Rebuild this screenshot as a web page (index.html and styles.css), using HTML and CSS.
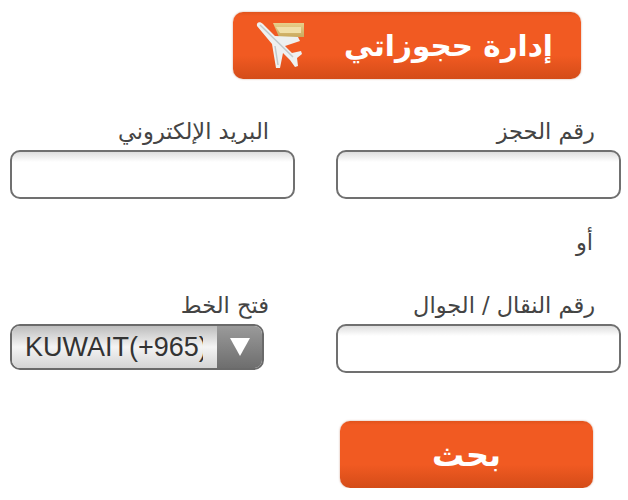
FILE: index.html
```html
<!DOCTYPE html>
<html lang="ar" dir="rtl">
<head>
    <meta charset="UTF-8">
    <meta name="viewport" content="width=device-width, initial-scale=1.0">
    <title>إدارة حجوزاتي</title>
    <link rel="stylesheet" href="styles.css">
</head>
<body>
    <div class="container">
        <div class="header">
            <button type="button" class="btn btn-manage">
                <span>إدارة حجوزاتي</span>
                <svg class="plane" width="50" height="54" viewBox="0 0 50 54" aria-hidden="true">
                    <defs>
                        <linearGradient id="ticket" x1="0" y1="0" x2="0" y2="1">
                            <stop offset="0" stop-color="#e8cf8a"/>
                            <stop offset="1" stop-color="#c9a95e"/>
                        </linearGradient>
                    </defs>
                    <path d="M18 4 H49 V18 H24 Z" fill="url(#ticket)"/>
                    <path d="M21 8 H46 V14 H25 Z" fill="#f0dfa8"/>
                    <path d="M2 7 C1 3 5 2 8 5 L20 17 L43 18 L45 22 L30 27 L37 34 L46 32 L47 35 L42 39 L43 47 L40 48 L35 41 L28 34 L25 49 L21 49 L17 25 Z" fill="#eef0f0"/>
                    <path d="M5 6 L38 38 M20 27 L23 46" fill="none" stroke="#c2c9cb" stroke-width="1.5"/>
                </svg>
            </button>
        </div>

        <form class="search-form">
            <div class="form-row">
                <div class="form-group">
                    <label for="pnr">رقم الحجز</label>
                    <input type="text" id="pnr">
                </div>
                <div class="form-group">
                    <label for="email">البريد الإلكتروني</label>
                    <input type="text" id="email">
                </div>
            </div>

            <div class="or">أو</div>

            <div class="form-row">
                <div class="form-group">
                    <label for="mobile">رقم النقال / الجوال</label>
                    <input type="text" id="mobile">
                </div>
                <div class="form-group">
                    <label for="code">فتح الخط</label>
                    <div class="select-box">
                        <select id="code">
                            <option>KUWAIT(+965)</option>
                        </select>
                        <div class="select-arrow"></div>
                    </div>
                </div>
            </div>

            <div class="btn-container">
                <button type="submit" class="btn btn-search">بحث</button>
            </div>
        </form>
    </div>
</body>
</html>
```

FILE: styles.css
```css
* {
    margin: 0;
    padding: 0;
    box-sizing: border-box;
}

body {
    background-color: #ffffff;
    color: #444444;
    font-family: "DejaVu Sans", sans-serif;
}

.container {
    padding: 12px 7px 0 10px;
}

.header {
    padding-right: 40px;
    margin-bottom: 41px;
}

.btn {
    display: flex;
    align-items: center;
    justify-content: center;
    color: #ffffff;
    border: none;
    border-radius: 10px;
    background: linear-gradient(#e0531c 0, #f15a22 6%, #f15a22 65%, #d44c18 100%);
    font-family: inherit;
    font-weight: bold;
    box-shadow: 0 0 2px rgba(150, 60, 20, 0.5);
}

.btn-manage {
    width: 348px;
    height: 67px;
    justify-content: flex-start;
    padding-right: 28px;
    font-size: 29.5px;
    gap: 39px;
}

.plane {
    display: block;
}

.form-row {
    display: grid;
    grid-template-columns: 285px 285px;
    gap: 41px;
}

label {
    display: block;
    height: 30px;
    margin-right: 26px;
    font-size: 22.5px;
    line-height: 22px;
    white-space: nowrap;
}

input {
    display: block;
    width: 100%;
    height: 49px;
    border: 2px solid #707070;
    border-radius: 10px;
    background: linear-gradient(#dedede 0, #ffffff 10px);
}

.or {
    height: 95px;
    padding: 28px 28px 0 0;
    font-size: 22.5px;
    line-height: 30px;
}

.select-box {
    direction: ltr;
    display: flex;
    width: 254px;
    height: 46px;
    margin-right: 31px;
    border: 2px solid #6a6a6a;
    border-radius: 10px;
    overflow: hidden;
}

select {
    appearance: none;
    flex: 1;
    min-width: 0;
    border: none;
    padding: 0 14px 0 13px;
    color: #333333;
    font-family: "Liberation Sans", sans-serif;
    font-size: 27px;
    background: linear-gradient(#bdbdbd 0%, #f4f4f4 50%, #d4d4d4 100%);
}

.select-arrow {
    display: flex;
    align-items: center;
    justify-content: center;
    width: 45px;
    background: linear-gradient(#9a9a9a, #6e6e6e);
}

.select-arrow::after {
    content: "";
    border-top: 18px solid #ffffff;
    border-left: 10px solid transparent;
    border-right: 10px solid transparent;
}

.btn-container {
    display: flex;
    padding-right: 28px;
    margin-top: 48px;
}

.btn-search {
    width: 253px;
    height: 67px;
    font-size: 32px;
}
```
